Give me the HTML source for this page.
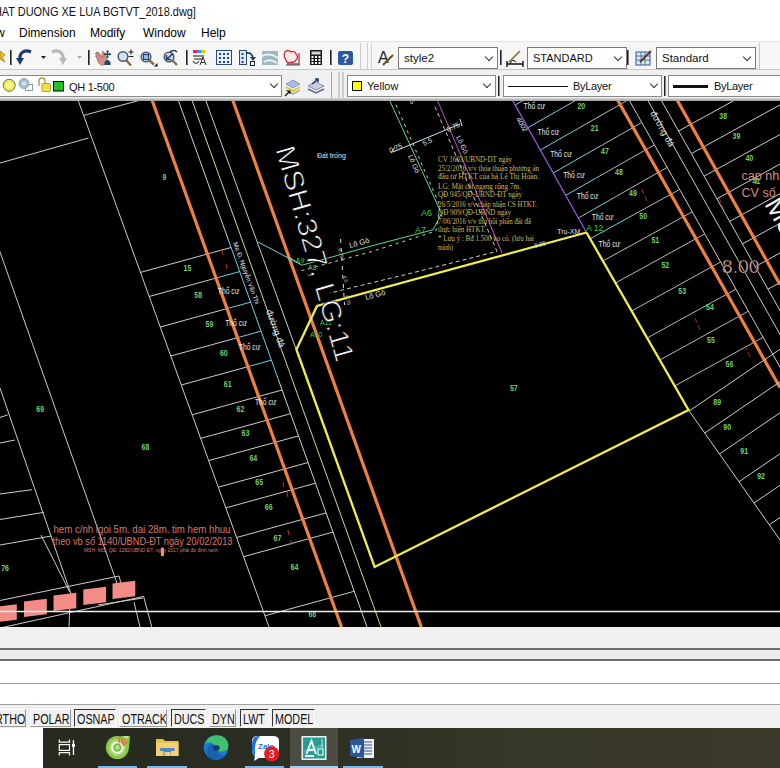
<!DOCTYPE html>
<html><head><meta charset="utf-8">
<style>
*{margin:0;padding:0;box-sizing:border-box}
html,body{width:780px;height:768px;overflow:hidden;background:#f0f0f0;font-family:"Liberation Sans",sans-serif;position:relative}
.a{position:absolute}
.t{position:absolute;white-space:nowrap;color:#000;font-size:12px;line-height:1}
#title{left:0;top:0;width:780px;height:22px;background:#fff}
#menu{left:0;top:22px;width:780px;height:20px;background:#fff}
#tb1{left:0;top:41px;width:780px;height:29px;background:#f6f6f6;border-top:1px solid #e4e4e4;border-bottom:1px solid #c8c8c8}
#tb2{left:0;top:70px;width:780px;height:31px;background:#f0f0f0;overflow:hidden}
.combo{position:absolute;background:#fff;border:1px solid #7a7a7a}
.chev{position:absolute;width:6px;height:6px;border-right:1.3px solid #333;border-bottom:1.3px solid #333;transform:rotate(45deg)}
.sep{position:absolute;width:2px;background:#222}
.grip{position:absolute;width:1px;background:#c0c0c0}
#draw{left:0;top:101px;width:780px;height:526px;background:#000;overflow:hidden}
#cmd{left:0;top:627px;width:780px;height:78px;background:#f0f0f0}
#status{left:0;top:705px;width:780px;height:23px;background:#f0f0f0}
.sb{position:absolute;top:4px;height:18px;font-size:14px;line-height:18px;color:#111;padding-left:2px;white-space:nowrap;overflow:hidden}
.sb span{display:inline-block;transform:scaleX(0.77);transform-origin:0 0}
.sunk{border-top:1px solid #333;border-left:1px solid #333;border-right:1px solid #fff;border-bottom:1px solid #fff}
.rais{border-top:1px solid #fff;border-left:1px solid #fff;border-right:1px solid #999;border-bottom:1px solid #999}
#task{left:0;top:728px;width:780px;height:40px;background:linear-gradient(90deg,#262a1e 0%,#2a2d21 30%,#303226 50%,#383828 70%,#3c3a2a 100%)}
</style></head><body>
<div id="title" class="a"><div class="t" style="left:-13.8px;top:6px;font-size:12.5px;transform:scaleX(0.875);transform-origin:0 0;color:#111">NHAT DUONG XE LUA BGTVT_2018.dwg]</div></div>
<div id="menu" class="a">
<div class="t" style="left:-4px;top:5px">w</div>
<div class="t" style="left:19px;top:5px">Dimension</div>
<div class="t" style="left:90px;top:5px">Modify</div>
<div class="t" style="left:143px;top:5px">Window</div>
<div class="t" style="left:201px;top:5px">Help</div>
</div>
<div id="tb1" class="a">
<svg class="a" style="left:0;top:0" width="780" height="28" viewBox="0 42 780 28">
<!-- lightning partial -->
<path d="M0 51 L5 55 L2 57 L5 62 L0 59 Z" fill="#f0c020" stroke="#806000" stroke-width="0.6"/>
<rect x="10" y="50" width="1.6" height="15" fill="#222"/>
<!-- undo -->
<path d="M31 52 C24 49 19 53 20 60" fill="none" stroke="#1c3c70" stroke-width="3.2"/>
<path d="M16 58 L24 58 L20 65 Z" fill="#1c3c70"/>
<path d="M41 56 L46 56 L43.5 59 Z" fill="#222"/>
<!-- redo gray -->
<path d="M52 52 C59 49 64 53 63 60" fill="none" stroke="#b8b8b8" stroke-width="3.2"/>
<path d="M67 58 L59 58 L63 65 Z" fill="#b8b8b8"/>
<path d="M77 56 L82 56 L79.5 59 Z" fill="#aaa"/>
<rect x="88" y="50" width="1.6" height="15" fill="#222"/>
<!-- pan hand -->
<path d="M95.5 53 Q97 51 99 53 L103 58 Q101 51 103.5 51.5 L106 57 Q107 60 107 63 L104 65 Q100 66 98 62 Z" fill="#d89088" stroke="#a06058" stroke-width="0.7"/>
<path d="M95 56 L100 61 M97.5 53.5 L102 59" stroke="#a06058" stroke-width="0.6"/>
<path d="M104.5 62 L107.5 59.5 L110.5 62 L110.5 65 L104.5 65 Z" fill="#1f4a6a"/>
<path d="M107.5 51 L107.5 57.5 M104.5 54.2 L110.5 54.2" stroke="#1f4a5a" stroke-width="1.4"/>
<path d="M106 52 L107.5 50 L109 52 Z M106 56.5 L107.5 58.5 L109 56.5 Z M105.5 52.7 L103.5 54.2 L105.5 55.7 Z M109.5 52.7 L111.5 54.2 L109.5 55.7 Z" fill="#1f4a5a"/>
<!-- zoom realtime -->
<path d="M126 60 L131 65.5" stroke="#8a7040" stroke-width="2.4"/>
<circle cx="123" cy="56.5" r="4.8" fill="#d0e2f2" stroke="#505a66" stroke-width="1.5"/>
<path d="M131 49.5 L131 54.5 M128.5 52 L133.5 52 M128.5 56.5 L133.5 56.5" stroke="#222" stroke-width="1.1"/>
<!-- zoom window -->
<path d="M149 60 L154 64.5" stroke="#8a7040" stroke-width="2.4"/>
<circle cx="146" cy="57" r="4.8" fill="#d0e2f2" stroke="#505a66" stroke-width="1.5"/>
<rect x="143.5" y="54.5" width="5" height="5" fill="#9ac0e8" stroke="#1c3c70" stroke-width="1.1"/>
<path d="M154 66.5 L157.5 66.5 L157.5 63 Z" fill="#111"/>
<!-- zoom previous -->
<path d="M172 60 L177 65" stroke="#8a7040" stroke-width="2.4"/>
<circle cx="169" cy="57" r="4.8" fill="#d0e2f2" stroke="#505a66" stroke-width="1.5"/>
<path d="M173 53.5 L167 59 M166.5 55 L166.5 59.5 L171 59.5" stroke="#1c3c70" stroke-width="1.6" fill="none"/>
<path d="M170 52 Q174 49 177 52" stroke="#1c3c70" stroke-width="1.6" fill="none"/>
<rect x="186" y="50" width="1.6" height="15" fill="#222"/>
<!-- properties -->
<rect x="193" y="50" width="4" height="3" fill="#e02080"/><rect x="197" y="50" width="4" height="3" fill="#20a0e0"/><rect x="201" y="50" width="4" height="3" fill="#f0c000"/>
<path d="M193 56 L204 56 M194 59 L203 59" stroke="#606060" stroke-width="1.3"/>
<path d="M200 65 L203 57 L206 65 M201 62.5 L205 62.5" stroke="#333" stroke-width="1" fill="none"/>
<path d="M193 61 Q196 66 199 61" stroke="#555" stroke-width="1.4" fill="none"/>
<!-- design center -->
<rect x="216.5" y="50.5" width="15" height="14" fill="#e6f0fa" stroke="#2a4a7a" stroke-width="1"/>
<g fill="#2a4a7a"><rect x="219" y="53" width="2" height="2"/><rect x="223" y="53" width="2" height="2"/><rect x="227" y="53" width="2" height="2"/><rect x="219" y="57" width="2" height="2"/><rect x="223" y="57" width="2" height="2"/><rect x="227" y="57" width="2" height="2"/><rect x="219" y="61" width="2" height="2"/><rect x="223" y="61" width="2" height="2"/><rect x="227" y="61" width="2" height="2"/></g>
<!-- tool palettes -->
<rect x="239.5" y="50.5" width="7" height="14" fill="#dce8f6" stroke="#2a4a7a" stroke-width="1"/>
<g fill="#2a4a7a"><rect x="241.5" y="53" width="2" height="2"/><rect x="241.5" y="57" width="2" height="2"/><rect x="241.5" y="61" width="2" height="2"/></g>
<path d="M246 53 Q252 52 253 58" stroke="#1c3c70" stroke-width="1.6" fill="none"/><path d="M250 57 L256 57 L253 61 Z" fill="#1c3c70"/>
<rect x="250.5" y="61.5" width="4" height="4" fill="#fff" stroke="#222" stroke-width="1"/>
<!-- sheet set (gray) -->
<rect x="262" y="51" width="16" height="14" fill="#9fb8bf"/>
<path d="M262 56 Q270 52 278 58 M264 62 Q270 58 277 63" stroke="#e8f0f0" stroke-width="2" fill="none"/>
<!-- markup red -->
<path d="M285 52 Q288 49 291 52 Q295 50 296 54 Q299 57 296 60 Q295 63 291 62 Q287 64 286 60 Q283 56 285 52 Z" fill="#fde8e8" stroke="#c83040" stroke-width="1.3"/>
<path d="M299 53 L299 64 L287 64" stroke="#c83040" stroke-width="1.3" fill="none"/>
<path d="M286 65 L300 65" stroke="#2a6a6a" stroke-width="1"/>
<!-- calculator -->
<rect x="310" y="50" width="12" height="15" fill="#1a1a1a"/>
<rect x="311.5" y="51.5" width="9" height="3" fill="#c8d8c8"/>
<g fill="#fff"><rect x="311.5" y="56" width="2" height="2"/><rect x="315" y="56" width="2" height="2"/><rect x="318.5" y="56" width="2" height="2"/><rect x="311.5" y="59" width="2" height="2"/><rect x="315" y="59" width="2" height="2"/><rect x="318.5" y="59" width="2" height="2"/><rect x="311.5" y="62" width="2" height="2"/><rect x="315" y="62" width="2" height="2"/><rect x="318.5" y="62" width="2" height="2"/></g>
<rect x="330" y="50" width="1.6" height="15" fill="#222"/>
<!-- help -->
<rect x="338" y="51" width="15" height="14" rx="2" fill="#2a5a9a"/>
<text x="345.5" y="63" font-family="Liberation Sans" font-weight="bold" font-size="12" fill="#fff" text-anchor="middle">?</text>
<rect x="360" y="43" width="1" height="26" fill="#c8c8c8"/>
<rect x="367" y="43" width="1" height="26" fill="#d0d0d0"/>
<rect x="371" y="43" width="1" height="26" fill="#d0d0d0"/>
<!-- text style A -->
<text x="378" y="63" font-family="Liberation Sans" font-size="16" fill="#222">A</text>
<path d="M383 65 L393 55" stroke="#6a4a20" stroke-width="2"/>
<rect x="500" y="50" width="1.6" height="15" fill="#222"/>
<!-- dim style icon -->
<path d="M507 64 L523 64 M507 61 L507 67 M523 61 L523 67" stroke="#111" stroke-width="1.4"/>
<path d="M509 62 L520 51" stroke="#8a6a30" stroke-width="1.6"/>
<path d="M510 64 Q512 58 516 62" stroke="#111" stroke-width="1" fill="none"/>
<rect x="627" y="50" width="1.6" height="15" fill="#222"/>
<!-- table style icon -->
<rect x="636" y="52" width="14" height="13" fill="#dce8f6" stroke="#2a5a9a" stroke-width="1"/>
<path d="M636 56 L650 56 M636 60 L650 60 M641 52 L641 65 M645 52 L645 65" stroke="#2a5a9a" stroke-width="0.8"/>
<path d="M640 62 L651 51" stroke="#5a3a20" stroke-width="1.8"/>
<rect x="759" y="43" width="1" height="26" fill="#c8c8c8"/>
</svg>
<div class="combo" style="left:398px;top:5px;width:100px;height:22px"><div class="t" style="left:5px;top:5px;font-size:11.5px;color:#111">style2</div><div class="chev" style="left:86.5px;top:6px"></div></div>
<div class="combo" style="left:527px;top:5px;width:100px;height:22px"><div class="t" style="left:5px;top:5px;font-size:11px;color:#111">STANDARD</div><div class="chev" style="left:86.5px;top:6px"></div></div>
<div class="combo" style="left:656px;top:5px;width:100px;height:22px"><div class="t" style="left:5px;top:5px;font-size:11.5px;color:#111">Standard</div><div class="chev" style="left:86.5px;top:6px"></div></div>
</div>
<div id="tb2" class="a">
<div class="a" style="left:0;top:27.7px;width:780px;height:3.3px;background:linear-gradient(#dcdcdc,#9a9a9a)"></div>
<div class="combo" style="left:-3px;top:5px;width:285px;height:22px;border-color:#888"><div class="t" style="left:71px;top:6px;font-size:11px;letter-spacing:-0.3px;color:#111">QH 1-500</div><div class="chev" style="left:273px;top:5px"></div></div>
<div class="combo" style="left:347px;top:5px;width:149px;height:22px;border-color:#888"><div style="position:absolute;left:4px;top:5px;width:10px;height:10px;background:#ffff00;border:1px solid #000"></div><div class="t" style="left:19px;top:5px;font-size:11px;color:#111">Yellow</div><div class="chev" style="left:135.5px;top:5px"></div></div>
<div class="combo" style="left:503px;top:5px;width:159px;height:22px;border-color:#888"><div style="position:absolute;left:4px;top:10px;width:60px;height:1px;background:#111"></div><div class="t" style="left:69px;top:5px;font-size:11px;letter-spacing:-0.3px;color:#111">ByLayer</div><div class="chev" style="left:146.5px;top:5px"></div></div>
<div class="combo" style="left:668px;top:5px;width:120px;height:22px;border-color:#888"><div style="position:absolute;left:4px;top:9px;width:35px;height:3px;background:#111"></div><div class="t" style="left:45px;top:5px;font-size:11px;letter-spacing:-0.3px;color:#111">ByLayer</div></div>
<svg class="a" style="left:0;top:0" width="780" height="30" viewBox="0 70 780 30">
<circle cx="9.2" cy="85.3" r="6" fill="#f0ec60" stroke="#707040" stroke-width="1"/>
<circle cx="9.2" cy="85.3" r="3" fill="#fafa90"/>
<rect x="25.5" y="84.5" width="7" height="6" fill="#fff" stroke="#8898a8" stroke-width="1"/>
<circle cx="24" cy="83.5" r="5" fill="#a8c0d0" stroke="#7890a0" stroke-width="0.8"/>
<circle cx="24" cy="83.5" r="2" fill="#d8e4ec"/>
<path d="M39 86 L39 81 Q39 78 42 78 Q45 78 45 81 L45 84" stroke="#b0a040" stroke-width="1.4" fill="none"/>
<rect x="42" y="83.5" width="8.5" height="8" rx="1" fill="#f0e040" stroke="#a09030" stroke-width="0.8"/>
<rect x="53.5" y="81.5" width="10" height="9.5" fill="#22c022" stroke="#000" stroke-width="1"/>
<rect x="331" y="72" width="1" height="26" fill="#a8a8a8"/>
<rect x="338.5" y="72" width="1" height="26" fill="#a8a8a8"/>
<rect x="342.5" y="72" width="1" height="26" fill="#a8a8a8"/>
<rect x="498" y="76" width="1.5" height="20" fill="#222"/>
<rect x="664" y="76" width="1.5" height="20" fill="#222"/>
<!-- layer icons -->
<path d="M286 84 L293 80 L300 84 L293 88 Z" fill="#a8b8e8" stroke="#6878a8" stroke-width="0.6"/>
<path d="M286 87 L293 91 L300 87" stroke="#d8c830" stroke-width="2" fill="none"/>
<path d="M286 90 L293 94 L300 90" stroke="#a0a060" stroke-width="1.2" fill="none"/>
<path d="M285 96 L290 91 M287 91 L290 91 L290 94" stroke="#111" stroke-width="1.2" fill="none"/>
<path d="M308 86 L316 82 L324 86 L316 90 Z" fill="#c8d0e0" stroke="#5a6a8a" stroke-width="0.7"/>
<path d="M308 89 L316 93 L324 89" stroke="#5a6a8a" stroke-width="1.4" fill="none"/>
<path d="M312 84 L318 79 M315 79 L318 79 L318 82" stroke="#1c3c70" stroke-width="1.6" fill="none"/>
</svg>
</div>
<div id="draw" class="a"><svg width="780" height="526" viewBox="0 101 780 526" style="position:absolute;left:0;top:0">
<line x1="78.0" y1="100.0" x2="269.0" y2="627.0" stroke="#cccccc" stroke-width="1" />
<line x1="83.3" y1="115.5" x2="138.5" y2="100.6" stroke="#cccccc" stroke-width="1" />
<line x1="0.0" y1="163.0" x2="88.5" y2="138.0" stroke="#cccccc" stroke-width="1" />
<line x1="-0.7" y1="250.0" x2="120.0" y2="591.8" stroke="#cccccc" stroke-width="1" />
<line x1="0.0" y1="388.0" x2="72.0" y2="597.0" stroke="#cccccc" stroke-width="1" />
<line x1="0.0" y1="417.4" x2="7.7" y2="415.0" stroke="#cccccc" stroke-width="1" />
<line x1="0.0" y1="443.0" x2="15.0" y2="440.0" stroke="#cccccc" stroke-width="1" />
<line x1="0.0" y1="519.5" x2="44.0" y2="512.3" stroke="#cccccc" stroke-width="1" />
<line x1="0.0" y1="494.0" x2="32.0" y2="489.7" stroke="#cccccc" stroke-width="1" />
<line x1="0.0" y1="545.0" x2="51.3" y2="536.0" stroke="#cccccc" stroke-width="1" />
<line x1="41.0" y1="535.0" x2="69.7" y2="592.0" stroke="#cccccc" stroke-width="1" />
<line x1="0.0" y1="600.5" x2="119.0" y2="576.0" stroke="#cccccc" stroke-width="1" />
<line x1="0.0" y1="628.0" x2="143.6" y2="596.4" stroke="#cccccc" stroke-width="1" />
<line x1="143.6" y1="596.4" x2="151.8" y2="627.0" stroke="#cccccc" stroke-width="1" />
<line x1="119.0" y1="576.0" x2="125.0" y2="597.0" stroke="#cccccc" stroke-width="1" />
<line x1="134.0" y1="602.0" x2="140.0" y2="627.0" stroke="#cccccc" stroke-width="1" />
<line x1="98.0" y1="605.0" x2="143.0" y2="598.0" stroke="#cccccc" stroke-width="1" />
<line x1="69.0" y1="627.0" x2="70.0" y2="600.0" stroke="#cccccc" stroke-width="1" />
<polygon points="-6.0,622.5 16.8,619.8 16.8,604.3 -6.0,607.0" fill="#f38b86"/>
<polygon points="24.0,617.0 46.8,614.3 46.8,598.8 24.0,601.5" fill="#f38b86"/>
<polygon points="53.5,611.0 76.3,608.3 76.3,592.8 53.5,595.5" fill="#f38b86"/>
<polygon points="83.3,605.0 106.1,602.3 106.1,586.8 83.3,589.5" fill="#f38b86"/>
<polygon points="112.5,599.0 135.3,596.3 135.3,580.8 112.5,583.5" fill="#f38b86"/>
<text x="53.5" y="532.5" fill="#d8786e" font-size="10.5" font-family="Liberation Sans" textLength="177" lengthAdjust="spacingAndGlyphs">hem c/nh lgoi 5m. dai 28m. tim hem hhuu</text>
<text x="52.5" y="544.5" fill="#d8786e" font-size="10.5" font-family="Liberation Sans" textLength="180" lengthAdjust="spacingAndGlyphs">theo vb số 1140/UBND-ĐT ngày 20/02/2013</text>
<text x="84.0" y="552.3" fill="#d8786e" font-size="4.6" font-family="Liberation Sans" textLength="134" lengthAdjust="spacingAndGlyphs">MSH: 665, QĐ: 1282/UBND-ĐT, ngày 2017 phải đo định ranh</text>
<rect x="161" y="547.6" width="3" height="8.5" fill="#f38b86"/>
<line x1="178.2" y1="100.0" x2="228.4" y2="240.0" stroke="#b0dcd8" stroke-width="1" />
<line x1="228.4" y1="240.0" x2="278.5" y2="380.0" stroke="#70d0e0" stroke-width="1" />
<line x1="278.5" y1="380.0" x2="367.0" y2="627.0" stroke="#c8d8d8" stroke-width="1" />
<line x1="191.9" y1="100.0" x2="381.0" y2="627.0" stroke="#c0e090" stroke-width="1" />
<line x1="205.6" y1="100.0" x2="296.0" y2="349.0" stroke="#cccccc" stroke-width="1" />
<line x1="140.5" y1="272.4" x2="231.0" y2="247.5" stroke="#cccccc" stroke-width="1" />
<line x1="149.2" y1="296.5" x2="216.0" y2="278.1" stroke="#cccccc" stroke-width="1" />
<line x1="216.0" y1="278.1" x2="239.7" y2="271.6" stroke="#70d0e0" stroke-width="1" />
<line x1="160.3" y1="327.0" x2="227.0" y2="308.6" stroke="#cccccc" stroke-width="1" />
<line x1="227.0" y1="308.6" x2="250.6" y2="302.2" stroke="#70d0e0" stroke-width="1" />
<line x1="170.8" y1="356.0" x2="237.5" y2="337.7" stroke="#cccccc" stroke-width="1" />
<line x1="237.5" y1="337.7" x2="261.0" y2="331.2" stroke="#70d0e0" stroke-width="1" />
<line x1="181.3" y1="385.0" x2="247.9" y2="366.7" stroke="#cccccc" stroke-width="1" />
<line x1="247.9" y1="366.7" x2="271.4" y2="360.2" stroke="#70d0e0" stroke-width="1" />
<line x1="192.1" y1="414.8" x2="282.1" y2="390.0" stroke="#cccccc" stroke-width="1" />
<line x1="200.6" y1="438.4" x2="290.6" y2="413.7" stroke="#cccccc" stroke-width="1" />
<line x1="208.7" y1="460.6" x2="298.5" y2="435.9" stroke="#cccccc" stroke-width="1" />
<line x1="218.3" y1="487.2" x2="308.1" y2="462.5" stroke="#cccccc" stroke-width="1" />
<line x1="225.8" y1="507.9" x2="315.5" y2="483.2" stroke="#cccccc" stroke-width="1" />
<line x1="236.6" y1="537.5" x2="326.1" y2="512.9" stroke="#cccccc" stroke-width="1" />
<line x1="243.5" y1="556.7" x2="333.0" y2="532.1" stroke="#cccccc" stroke-width="1" />
<line x1="264.9" y1="615.8" x2="354.2" y2="591.3" stroke="#cccccc" stroke-width="1" />
<line x1="152.0" y1="100.0" x2="341.5" y2="627.0" stroke="#ee8040" stroke-width="3.2" />
<line x1="232.7" y1="100.0" x2="421.3" y2="627.0" stroke="#ee8040" stroke-width="3.2" />
<line x1="222.0" y1="250.0" x2="222.8" y2="255.0" stroke="#c03020" stroke-width="1" />
<line x1="226.0" y1="264.0" x2="226.8" y2="269.0" stroke="#c03020" stroke-width="1" />
<line x1="283.0" y1="482.0" x2="283.8" y2="487.0" stroke="#c03020" stroke-width="1" />
<line x1="287.0" y1="492.0" x2="287.8" y2="497.0" stroke="#c03020" stroke-width="1" />
<line x1="288.0" y1="530.0" x2="288.8" y2="535.0" stroke="#c03020" stroke-width="1" />
<line x1="291.0" y1="540.0" x2="291.8" y2="545.0" stroke="#c03020" stroke-width="1" />
<line x1="629.2" y1="100.2" x2="791.5" y2="387.5" stroke="#cccccc" stroke-width="1" />
<line x1="647.7" y1="100.2" x2="810.0" y2="387.5" stroke="#c8d8a8" stroke-width="1" />
<line x1="661.2" y1="100.2" x2="823.5" y2="387.5" stroke="#cccccc" stroke-width="1" />
<line x1="515.2" y1="105.0" x2="553.2" y2="83.3" stroke="#70d0e0" stroke-width="1" />
<line x1="553.2" y1="83.3" x2="603.5" y2="54.7" stroke="#b8b8b8" stroke-width="1" />
<line x1="527.9" y1="127.7" x2="565.9" y2="106.0" stroke="#70d0e0" stroke-width="1" />
<line x1="565.9" y1="106.0" x2="616.3" y2="77.3" stroke="#b8b8b8" stroke-width="1" />
<line x1="540.4" y1="150.0" x2="578.4" y2="128.3" stroke="#70d0e0" stroke-width="1" />
<line x1="578.4" y1="128.3" x2="628.8" y2="99.6" stroke="#b8b8b8" stroke-width="1" />
<line x1="553.2" y1="173.0" x2="591.2" y2="151.3" stroke="#70d0e0" stroke-width="1" />
<line x1="591.2" y1="151.3" x2="641.8" y2="122.5" stroke="#b8b8b8" stroke-width="1" />
<line x1="565.7" y1="195.4" x2="603.7" y2="173.7" stroke="#70d0e0" stroke-width="1" />
<line x1="603.7" y1="173.7" x2="654.4" y2="144.9" stroke="#b8b8b8" stroke-width="1" />
<line x1="578.4" y1="218.0" x2="616.4" y2="196.3" stroke="#70d0e0" stroke-width="1" />
<line x1="616.4" y1="196.3" x2="667.2" y2="167.4" stroke="#b8b8b8" stroke-width="1" />
<line x1="590.1" y1="238.8" x2="628.1" y2="217.8" stroke="#70d0e0" stroke-width="1" />
<line x1="628.1" y1="217.8" x2="679.6" y2="189.5" stroke="#b8b8b8" stroke-width="1" />
<line x1="602.9" y1="261.0" x2="692.3" y2="211.8" stroke="#b8b8b8" stroke-width="1" />
<line x1="615.5" y1="283.0" x2="704.7" y2="233.9" stroke="#b8b8b8" stroke-width="1" />
<line x1="631.6" y1="311.0" x2="720.6" y2="262.0" stroke="#b8b8b8" stroke-width="1" />
<line x1="647.1" y1="338.0" x2="735.9" y2="289.2" stroke="#b8b8b8" stroke-width="1" />
<line x1="659.8" y1="360.0" x2="748.4" y2="311.2" stroke="#b8b8b8" stroke-width="1" />
<line x1="674.7" y1="386.0" x2="763.2" y2="337.3" stroke="#b8b8b8" stroke-width="1" />
<line x1="678.6" y1="131.0" x2="780.0" y2="75.2" stroke="#cccccc" stroke-width="1" />
<line x1="691.4" y1="153.6" x2="780.0" y2="104.9" stroke="#cccccc" stroke-width="1" />
<line x1="704.1" y1="176.2" x2="780.0" y2="134.5" stroke="#cccccc" stroke-width="1" />
<line x1="716.9" y1="198.8" x2="780.0" y2="164.1" stroke="#cccccc" stroke-width="1" />
<line x1="729.7" y1="221.4" x2="780.0" y2="193.7" stroke="#cccccc" stroke-width="1" />
<line x1="742.4" y1="244.0" x2="780.0" y2="223.3" stroke="#cccccc" stroke-width="1" />
<line x1="755.2" y1="266.6" x2="780.0" y2="253.0" stroke="#cccccc" stroke-width="1" />
<line x1="768.0" y1="289.2" x2="780.0" y2="282.6" stroke="#cccccc" stroke-width="1" />
<line x1="780.7" y1="311.8" x2="780.0" y2="312.2" stroke="#cccccc" stroke-width="1" />
<line x1="793.5" y1="334.4" x2="780.0" y2="341.8" stroke="#cccccc" stroke-width="1" />
<line x1="806.3" y1="357.0" x2="780.0" y2="371.4" stroke="#cccccc" stroke-width="1" />
<line x1="819.0" y1="379.6" x2="780.0" y2="401.1" stroke="#cccccc" stroke-width="1" />
<line x1="831.8" y1="402.2" x2="780.0" y2="430.7" stroke="#cccccc" stroke-width="1" />
<line x1="844.6" y1="424.8" x2="780.0" y2="460.3" stroke="#cccccc" stroke-width="1" />
<line x1="512.5" y1="100.2" x2="586.5" y2="232.5" stroke="#9a5ae0" stroke-width="1.25" />
<line x1="617.7" y1="100.2" x2="780.0" y2="387.5" stroke="#ee8040" stroke-width="3.2" />
<line x1="677.1" y1="100.0" x2="780.0" y2="284.6" stroke="#ee8040" stroke-width="3.2" />
<line x1="642.0" y1="189.0" x2="644.0" y2="194.0" stroke="#a03020" stroke-width="1" />
<line x1="645.0" y1="196.0" x2="647.0" y2="201.0" stroke="#a03020" stroke-width="1" />
<line x1="719.0" y1="198.0" x2="721.0" y2="203.0" stroke="#a03020" stroke-width="1" />
<line x1="722.0" y1="205.0" x2="724.0" y2="210.0" stroke="#a03020" stroke-width="1" />
<line x1="695.0" y1="318.0" x2="697.0" y2="323.0" stroke="#a03020" stroke-width="1" />
<line x1="698.0" y1="325.0" x2="700.0" y2="330.0" stroke="#a03020" stroke-width="1" />
<line x1="745.0" y1="345.0" x2="747.0" y2="350.0" stroke="#a03020" stroke-width="1" />
<line x1="748.0" y1="352.0" x2="750.0" y2="357.0" stroke="#a03020" stroke-width="1" />
<line x1="688.5" y1="410.0" x2="780.0" y2="540.0" stroke="#cccccc" stroke-width="1" />
<line x1="689.2" y1="411.0" x2="780.0" y2="349.3" stroke="#cccccc" stroke-width="1" />
<line x1="704.7" y1="433.0" x2="780.0" y2="381.8" stroke="#cccccc" stroke-width="1" />
<line x1="719.5" y1="454.0" x2="780.0" y2="412.8" stroke="#cccccc" stroke-width="1" />
<line x1="739.0" y1="481.7" x2="780.0" y2="453.8" stroke="#cccccc" stroke-width="1" />
<line x1="754.0" y1="503.0" x2="780.0" y2="485.3" stroke="#cccccc" stroke-width="1" />
<line x1="769.3" y1="524.8" x2="780.0" y2="517.5" stroke="#cccccc" stroke-width="1" />
<polyline points="389.5,100.2 441.5,213.6 433.0,229.8 370.0,246.3 330.0,257.5 301.8,265.2 290.0,257.8" fill="none" stroke="#60d888" stroke-width="1" />
<polyline points="396.0,104.8 440.0,206.0 436.0,231.0 372.0,251.5 300.0,271.0" fill="none" stroke="#cccccc" stroke-width="1" stroke-dasharray="3 4"/>
<polyline points="435.0,106.7 497.0,251.4 420.0,271.0 330.0,293.0" fill="none" stroke="#cccccc" stroke-width="1" stroke-dasharray="4 3"/>
<line x1="437.7" y1="100.9" x2="502.0" y2="252.7" stroke="#b048b0" stroke-width="1.1" />
<polyline points="258.0,242.0 301.0,264.6" fill="none" stroke="#70d0e0" stroke-width="1" />
<text x="438.0" y="162.0" fill="#cbbb62" font-size="7.6" font-family="Liberation Serif" textLength="74" lengthAdjust="spacingAndGlyphs">CV 1603/UBND-DT ngày</text>
<text x="438.0" y="170.5" fill="#cbbb62" font-size="7.6" font-family="Liberation Serif" textLength="101" lengthAdjust="spacingAndGlyphs">25/2/2016 v/v thỏa thuận phương án</text>
<text x="438.0" y="179.0" fill="#cbbb62" font-size="7.6" font-family="Liberation Serif" textLength="101" lengthAdjust="spacingAndGlyphs">đầu tư HTKT của bà Lê Thị Hoàn.</text>
<text x="438.0" y="188.5" fill="#cbbb62" font-size="7.6" font-family="Liberation Serif" textLength="83" lengthAdjust="spacingAndGlyphs">LG: Mặt cắt ngang rộng 7m.</text>
<text x="438.0" y="197.0" fill="#cbbb62" font-size="7.6" font-family="Liberation Serif" textLength="84" lengthAdjust="spacingAndGlyphs">QĐ 945/QĐ-UBND-ĐT ngày</text>
<text x="438.0" y="206.5" fill="#cbbb62" font-size="7.6" font-family="Liberation Serif" textLength="99" lengthAdjust="spacingAndGlyphs">26/5/2016 v/v chấp nhận CS HTKT.</text>
<text x="438.0" y="215.0" fill="#cbbb62" font-size="7.6" font-family="Liberation Serif" textLength="73" lengthAdjust="spacingAndGlyphs">QĐ 909/QĐ-UBND ngày</text>
<text x="438.0" y="224.0" fill="#cbbb62" font-size="7.6" font-family="Liberation Serif" textLength="93" lengthAdjust="spacingAndGlyphs">7/06/2016 v/v thu hồi phần đất đã</text>
<text x="438.0" y="232.0" fill="#cbbb62" font-size="7.6" font-family="Liberation Serif" textLength="48" lengthAdjust="spacingAndGlyphs">thực hiện HTKT.</text>
<text x="438.0" y="241.0" fill="#cbbb62" font-size="7.6" font-family="Liberation Serif" textLength="96" lengthAdjust="spacingAndGlyphs">* Lưu ý : Bđ 1.500 ko có. (lưu hai</text>
<text x="438.0" y="249.5" fill="#cbbb62" font-size="7.6" font-family="Liberation Serif" textLength="15" lengthAdjust="spacingAndGlyphs">mảnh)</text>
<polyline points="586.5,232.5 688.5,410.0 374.6,567.0 296.4,349.5 317.0,306.0 586.5,232.5" fill="none" stroke="#f2ee48" stroke-width="2.3" stroke-linejoin="miter"/>
<text x="162.6" y="179.7" fill="#6ad26a" font-size="9.2" font-family="Liberation Sans" textLength="3.9" lengthAdjust="spacingAndGlyphs" font-weight="bold">9</text>
<text x="183.6" y="270.7" fill="#6ad26a" font-size="9.2" font-family="Liberation Sans" textLength="7.8" lengthAdjust="spacingAndGlyphs" font-weight="bold">15</text>
<text x="36.3" y="412.4" fill="#6ad26a" font-size="9.2" font-family="Liberation Sans" textLength="7.8" lengthAdjust="spacingAndGlyphs" font-weight="bold">69</text>
<text x="141.6" y="449.7" fill="#6ad26a" font-size="9.2" font-family="Liberation Sans" textLength="7.8" lengthAdjust="spacingAndGlyphs" font-weight="bold">68</text>
<text x="194.3" y="297.7" fill="#6ad26a" font-size="9.2" font-family="Liberation Sans" textLength="7.8" lengthAdjust="spacingAndGlyphs" font-weight="bold">58</text>
<text x="205.6" y="327.3" fill="#6ad26a" font-size="9.2" font-family="Liberation Sans" textLength="7.8" lengthAdjust="spacingAndGlyphs" font-weight="bold">59</text>
<text x="219.9" y="355.5" fill="#6ad26a" font-size="9.2" font-family="Liberation Sans" textLength="7.8" lengthAdjust="spacingAndGlyphs" font-weight="bold">60</text>
<text x="223.8" y="386.7" fill="#6ad26a" font-size="9.2" font-family="Liberation Sans" textLength="7.8" lengthAdjust="spacingAndGlyphs" font-weight="bold">61</text>
<text x="236.6" y="412.4" fill="#6ad26a" font-size="9.2" font-family="Liberation Sans" textLength="7.8" lengthAdjust="spacingAndGlyphs" font-weight="bold">62</text>
<text x="241.6" y="435.5" fill="#6ad26a" font-size="9.2" font-family="Liberation Sans" textLength="7.8" lengthAdjust="spacingAndGlyphs" font-weight="bold">63</text>
<text x="249.4" y="460.7" fill="#6ad26a" font-size="9.2" font-family="Liberation Sans" textLength="7.8" lengthAdjust="spacingAndGlyphs" font-weight="bold">64</text>
<text x="255.3" y="485.0" fill="#6ad26a" font-size="9.2" font-family="Liberation Sans" textLength="7.8" lengthAdjust="spacingAndGlyphs" font-weight="bold">65</text>
<text x="264.8" y="509.7" fill="#6ad26a" font-size="9.2" font-family="Liberation Sans" textLength="7.8" lengthAdjust="spacingAndGlyphs" font-weight="bold">66</text>
<text x="273.6" y="540.7" fill="#6ad26a" font-size="9.2" font-family="Liberation Sans" textLength="7.8" lengthAdjust="spacingAndGlyphs" font-weight="bold">67</text>
<text x="290.6" y="570.4" fill="#6ad26a" font-size="9.2" font-family="Liberation Sans" textLength="7.8" lengthAdjust="spacingAndGlyphs" font-weight="bold">64</text>
<text x="308.4" y="617.1" fill="#6ad26a" font-size="9.2" font-family="Liberation Sans" textLength="7.8" lengthAdjust="spacingAndGlyphs" font-weight="bold">68</text>
<text x="509.9" y="390.7" fill="#6ad26a" font-size="9.2" font-family="Liberation Sans" textLength="7.8" lengthAdjust="spacingAndGlyphs" font-weight="bold">57</text>
<text x="577.4" y="108.5" fill="#6ad26a" font-size="9.2" font-family="Liberation Sans" textLength="7.8" lengthAdjust="spacingAndGlyphs" font-weight="bold">20</text>
<text x="590.8" y="131.4" fill="#6ad26a" font-size="9.2" font-family="Liberation Sans" textLength="7.8" lengthAdjust="spacingAndGlyphs" font-weight="bold">21</text>
<text x="601.1" y="153.7" fill="#6ad26a" font-size="9.2" font-family="Liberation Sans" textLength="7.8" lengthAdjust="spacingAndGlyphs" font-weight="bold">47</text>
<text x="615.1" y="175.2" fill="#6ad26a" font-size="9.2" font-family="Liberation Sans" textLength="7.8" lengthAdjust="spacingAndGlyphs" font-weight="bold">48</text>
<text x="629.1" y="196.0" fill="#6ad26a" font-size="9.2" font-family="Liberation Sans" textLength="7.8" lengthAdjust="spacingAndGlyphs" font-weight="bold">49</text>
<text x="639.3" y="218.9" fill="#6ad26a" font-size="9.2" font-family="Liberation Sans" textLength="7.8" lengthAdjust="spacingAndGlyphs" font-weight="bold">50</text>
<text x="651.4" y="243.1" fill="#6ad26a" font-size="9.2" font-family="Liberation Sans" textLength="7.8" lengthAdjust="spacingAndGlyphs" font-weight="bold">51</text>
<text x="661.4" y="268.0" fill="#6ad26a" font-size="9.2" font-family="Liberation Sans" textLength="7.8" lengthAdjust="spacingAndGlyphs" font-weight="bold">52</text>
<text x="719.3" y="118.7" fill="#6ad26a" font-size="9.2" font-family="Liberation Sans" textLength="7.8" lengthAdjust="spacingAndGlyphs" font-weight="bold">38</text>
<text x="732.6" y="138.7" fill="#6ad26a" font-size="9.2" font-family="Liberation Sans" textLength="7.8" lengthAdjust="spacingAndGlyphs" font-weight="bold">39</text>
<text x="745.4" y="161.0" fill="#6ad26a" font-size="9.2" font-family="Liberation Sans" textLength="7.8" lengthAdjust="spacingAndGlyphs" font-weight="bold">40</text>
<text x="752.4" y="183.9" fill="#6ad26a" font-size="9.2" font-family="Liberation Sans" textLength="7.8" lengthAdjust="spacingAndGlyphs" font-weight="bold">41</text>
<text x="678.3" y="294.2" fill="#6ad26a" font-size="9.2" font-family="Liberation Sans" textLength="7.8" lengthAdjust="spacingAndGlyphs" font-weight="bold">53</text>
<text x="706.1" y="310.4" fill="#6ad26a" font-size="9.2" font-family="Liberation Sans" textLength="7.8" lengthAdjust="spacingAndGlyphs" font-weight="bold">54</text>
<text x="707.1" y="342.7" fill="#6ad26a" font-size="9.2" font-family="Liberation Sans" textLength="7.8" lengthAdjust="spacingAndGlyphs" font-weight="bold">55</text>
<text x="725.5" y="366.9" fill="#6ad26a" font-size="9.2" font-family="Liberation Sans" textLength="7.8" lengthAdjust="spacingAndGlyphs" font-weight="bold">56</text>
<text x="713.3" y="404.7" fill="#6ad26a" font-size="9.2" font-family="Liberation Sans" textLength="7.8" lengthAdjust="spacingAndGlyphs" font-weight="bold">89</text>
<text x="723.3" y="430.2" fill="#6ad26a" font-size="9.2" font-family="Liberation Sans" textLength="7.8" lengthAdjust="spacingAndGlyphs" font-weight="bold">90</text>
<text x="740.3" y="454.0" fill="#6ad26a" font-size="9.2" font-family="Liberation Sans" textLength="7.8" lengthAdjust="spacingAndGlyphs" font-weight="bold">91</text>
<text x="757.2" y="479.0" fill="#6ad26a" font-size="9.2" font-family="Liberation Sans" textLength="7.8" lengthAdjust="spacingAndGlyphs" font-weight="bold">92</text>
<text x="1.2" y="570.7" fill="#6ad26a" font-size="9.2" font-family="Liberation Sans" textLength="7.8" lengthAdjust="spacingAndGlyphs" font-weight="bold">76</text>
<text x="217.8" y="293.5" fill="#e8e8e8" font-size="8.5" font-family="Liberation Sans" textLength="21.5" lengthAdjust="spacingAndGlyphs">Thổ cư</text>
<text x="225.2" y="326.0" fill="#e8e8e8" font-size="8.5" font-family="Liberation Sans" textLength="21.5" lengthAdjust="spacingAndGlyphs">Thổ cư</text>
<text x="238.8" y="350.0" fill="#e8e8e8" font-size="8.5" font-family="Liberation Sans" textLength="21.5" lengthAdjust="spacingAndGlyphs">Thổ cư</text>
<text x="254.9" y="405.0" fill="#e8e8e8" font-size="8.5" font-family="Liberation Sans" textLength="21.5" lengthAdjust="spacingAndGlyphs">Thổ cư</text>
<text x="523.6" y="108.8" fill="#e8e8e8" font-size="8.5" font-family="Liberation Sans" textLength="21.5" lengthAdjust="spacingAndGlyphs">Thổ cư</text>
<text x="537.5" y="135.0" fill="#e8e8e8" font-size="8.5" font-family="Liberation Sans" textLength="21.5" lengthAdjust="spacingAndGlyphs">Thổ cư</text>
<text x="550.2" y="157.0" fill="#e8e8e8" font-size="8.5" font-family="Liberation Sans" textLength="21.5" lengthAdjust="spacingAndGlyphs">Thổ cư</text>
<text x="563.2" y="177.8" fill="#e8e8e8" font-size="8.5" font-family="Liberation Sans" textLength="21.5" lengthAdjust="spacingAndGlyphs">Thổ cư</text>
<text x="576.8" y="199.0" fill="#e8e8e8" font-size="8.5" font-family="Liberation Sans" textLength="21.5" lengthAdjust="spacingAndGlyphs">Thổ cư</text>
<text x="591.8" y="219.9" fill="#e8e8e8" font-size="8.5" font-family="Liberation Sans" textLength="21.5" lengthAdjust="spacingAndGlyphs">Thổ cư</text>
<text x="598.6" y="247.0" fill="#e8e8e8" font-size="8.5" font-family="Liberation Sans" textLength="21.5" lengthAdjust="spacingAndGlyphs">Thổ cư</text>
<text x="594.8" y="231.0" fill="#44c844" font-size="8.5" font-family="Liberation Sans" text-anchor="middle">A 12</text>
<text x="568.8" y="234.0" fill="#e0e0e0" font-size="7" font-family="Liberation Sans" text-anchor="middle">Trụ-XM</text>
<text x="317.0" y="157.5" fill="#e8e8e8" font-size="7" font-family="Liberation Sans" >Đất trống</text>
<text x="432.0" y="216.0" fill="#44c844" font-size="9" font-family="Liberation Sans" text-anchor="end">A6</text>
<text x="426.0" y="233.0" fill="#44c844" font-size="9" font-family="Liberation Sans" text-anchor="end">A7</text>
<text x="300.0" y="263.0" fill="#44c844" font-size="7" font-family="Liberation Sans" text-anchor="middle">A9</text>
<text x="308.0" y="270.0" fill="#44c844" font-size="7" font-family="Liberation Sans" >A8</text>
<text x="320.0" y="325.0" fill="#44c844" font-size="7" font-family="Liberation Sans" >A11</text>
<text x="310.0" y="337.0" fill="#44c844" font-size="7" font-family="Liberation Sans" >A10</text>
<text x="650.0" y="113.0" fill="#e8e8e8" font-size="9" font-family="Liberation Sans" transform="rotate(60.5 650.0 113.0)" >đường đá</text>
<text x="266.0" y="311.0" fill="#e8e8e8" font-size="9" font-family="Liberation Sans" transform="rotate(70 266.0 311.0)" >đường đá</text>
<text x="233.0" y="243.0" fill="#e8e8e8" font-size="6.5" font-family="Liberation Sans" transform="rotate(70 233.0 243.0)" >Ma Đ. Nguyễn Văn Thi</text>
<text x="516.0" y="119.0" fill="#e8e8e8" font-size="7" font-family="Liberation Sans" transform="rotate(60 516.0 119.0)" >4002</text>
<text x="741.6" y="179.6" fill="#d88a7e" font-size="12.5" font-family="Liberation Sans" >cap nhat</text>
<text x="741.6" y="196.5" fill="#d88a7e" font-size="12.5" font-family="Liberation Sans" >CV số</text>
<text x="722.0" y="272.7" fill="#f8c0b4" font-size="18.5" font-family="Liberation Sans" textLength="37.4" lengthAdjust="spacingAndGlyphs" stroke="#000" stroke-width="0.45">8.00</text>
<text x="275.2" y="149.0" fill="#f8f8f8" font-size="27.5" font-family="Liberation Sans" transform="rotate(74 275.2 149.0)" textLength="223" lengthAdjust="spacingAndGlyphs" stroke="#000" stroke-width="0.7">MSH:327, LG:11</text>
<text x="764.0" y="204.0" fill="#f4f4f4" font-size="27" font-family="Liberation Sans" transform="rotate(60 764.0 204.0)" >MSH</text>
<text x="350.0" y="248.0" fill="#e0e0e0" font-size="7.5" font-family="Liberation Sans" transform="rotate(-15 350.0 248.0)" >Lô Gò</text>
<text x="366.0" y="300.0" fill="#e0e0e0" font-size="7.5" font-family="Liberation Sans" transform="rotate(-15 366.0 300.0)" >Lô Gò</text>
<line x1="340.6" y1="239.0" x2="344.5" y2="305.0" stroke="#e0e0e0" stroke-width="1" stroke-dasharray="4 5"/>
<text x="338.0" y="249.0" fill="#d0d0d0" font-size="5" font-family="Liberation Sans" transform="rotate(75 338.0 249.0)" >0.75</text>
<text x="343.0" y="276.0" fill="#d0d0d0" font-size="5" font-family="Liberation Sans" transform="rotate(75 343.0 276.0)" >4.5</text>
<text x="345.0" y="296.0" fill="#d0d0d0" font-size="5" font-family="Liberation Sans" transform="rotate(75 345.0 296.0)" >0.75</text>
<line x1="393.0" y1="152.0" x2="460.0" y2="124.0" stroke="#e0e0e0" stroke-width="1" />
<line x1="395.0" y1="147.0" x2="391.0" y2="153.0" stroke="#e0e0e0" stroke-width="1" />
<line x1="460.0" y1="119.0" x2="462.0" y2="126.0" stroke="#e0e0e0" stroke-width="1" />
<text x="390.5" y="153.0" fill="#e8e8e8" font-size="7" font-family="Liberation Sans" transform="rotate(-25 390.5 153.0)" >0.75</text>
<text x="424.0" y="146.0" fill="#e8e8e8" font-size="7" font-family="Liberation Sans" transform="rotate(-25 424.0 146.0)" >5.5</text>
<text x="448.0" y="132.0" fill="#e8e8e8" font-size="7" font-family="Liberation Sans" transform="rotate(-25 448.0 132.0)" >0.75</text>
<text x="408.0" y="156.0" fill="#e0e0e0" font-size="7" font-family="Liberation Sans" transform="rotate(67 408.0 156.0)" >Lô Gò</text>
<text x="456.0" y="137.0" fill="#e0e0e0" font-size="7" font-family="Liberation Sans" transform="rotate(65 456.0 137.0)" >Lô Gò</text>
<text x="410.0" y="104.0" fill="#e0e0e0" font-size="6" font-family="Liberation Sans" >0</text>
<text x="535.0" y="248.0" fill="#e0e0e0" font-size="6" font-family="Liberation Sans" transform="rotate(-15 535.0 248.0)" >8.85</text>
<line x1="0.0" y1="611.5" x2="780.0" y2="611.5" stroke="#f0f0f0" stroke-width="1.3" />
</svg></div>
<div id="cmd" class="a">
<div class="a" style="left:0;top:21px;width:780px;height:2px;background:#6e6e6e"></div>
<div class="a" style="left:0;top:23px;width:780px;height:10px;background:#ececec"></div>
<div class="a" style="left:0;top:32px;width:780px;height:2px;background:#6e6e6e"></div>
<div class="a" style="left:0;top:34px;width:780px;height:22px;background:#fff"></div>
<div class="a" style="left:0;top:56px;width:780px;height:1px;background:#a0a0a0"></div>
<div class="a" style="left:0;top:57px;width:780px;height:20px;background:#fff"></div>
<div class="a" style="left:0;top:77px;width:780px;height:1px;background:#a0a0a0"></div>
</div>
<div id="status" class="a">
<div class="sb rais" style="left:-8px;width:34px"><span>RTHO</span></div>
<div class="sb rais" style="left:30px;width:41px"><span>POLAR</span></div>
<div class="sb sunk" style="left:74px;width:42px"><span>OSNAP</span></div>
<div class="sb rais" style="left:119px;width:48px"><span>OTRACK</span></div>
<div class="sb sunk" style="left:171px;width:35px"><span>DUCS</span></div>
<div class="sb rais" style="left:209px;width:27px"><span>DYN</span></div>
<div class="sb sunk" style="left:240px;width:29px"><span>LWT</span></div>
<div class="sb sunk" style="left:272px;width:43px"><span>MODEL</span></div>
</div>
<div id="task" class="a">
<div class="a" style="left:0;top:0;width:43px;height:40px;background:#fff"></div>
<div class="a" style="left:290px;top:0;width:48px;height:40px;background:#4c4c42"></div>
<svg class="a" style="left:0;top:0" width="780" height="40" viewBox="0 728 780 40">
<!-- task view -->
<path d="M59.3 739.5 L59.3 742.2 L69.5 742.2 L69.5 739.5 M59.3 755.5 L59.3 752.6 L69.5 752.6 L69.5 755.5" stroke="#fff" stroke-width="1.2" fill="none"/>
<rect x="59.3" y="744.6" width="10.2" height="5.8" stroke="#fff" stroke-width="1.2" fill="none"/>
<rect x="72.8" y="740" width="1.3" height="15" fill="#fff"/>
<rect x="72" y="743.8" width="3" height="3" fill="#fff"/>
<!-- coc coc -->
<circle cx="117.4" cy="747.5" r="11.5" fill="#8cc84a"/>
<circle cx="117.4" cy="747.5" r="8.5" fill="#a8d870"/>
<circle cx="117.4" cy="747.5" r="6.3" fill="#f4f8e8"/>
<circle cx="117.4" cy="747.5" r="4.2" fill="#7cc040"/>
<circle cx="117.4" cy="747.5" r="2.2" fill="#b8e090"/>
<path d="M121 736 L130 736 L129 748 L122 743 Z" fill="#8cc84a"/>
<path d="M118.5 737.5 L119.5 743 M122 737 L121.5 743.5 M125 739 L122.5 744.5 M127.5 742 L123 745.5" stroke="#e87050" stroke-width="1.6"/>
<path d="M124 737 L128 737" stroke="#f8f0e0" stroke-width="1.2"/>
<rect x="98" y="766" width="39" height="2" fill="#76b9ed"/>
<!-- folder -->
<path d="M156 739 L163 739 L165 741 L178.5 741 L178.5 756 L156 756 Z" fill="#e8c050"/>
<rect x="156" y="743" width="22.5" height="13" fill="#f4d070"/>
<path d="M160 751 L160 748 L174.5 748 L174.5 751 L171 751 L171 756 L163.5 756 L163.5 751 Z" fill="#4a8ac8"/>
<rect x="164.5" y="752" width="6" height="4" fill="#f4d070"/>
<rect x="147" y="766" width="40" height="2" fill="#76b9ed"/>
<!-- edge -->
<circle cx="216" cy="747.5" r="12.2" fill="#1a7ad0"/>
<path d="M205 744 Q208 735.5 217 735.3 Q227 735.5 228.5 745 Q228.5 751 222 751.5 Q216 752 215 747 Q214 742 208 742.5 Q206 743 205 744 Z" fill="#40c070"/>
<path d="M206.5 751 Q207.5 743.5 214 744.5 Q218 746 217.5 751 Q218 756.5 226 755.5 Q221.5 760.5 214 759.5 Q207 758 206.5 751 Z" fill="#1860b0"/>
<ellipse cx="216.5" cy="748" rx="3.2" ry="2.8" fill="#123a70"/>
<!-- zalo -->
<path d="M252 741 Q252 736 258 736 L273 736 Q279 736 279 741 L279 752 Q279 758 273 758 L259 758 L254 761 L255 756 Q252 754 252 750 Z" fill="#fff"/>
<path d="M252 744 Q252 737 258 736 L260 736 Q254 742 255 753 L254 761 L255 756 Q252 754 252 750 Z" fill="#1e70e8"/>
<text x="258" y="749" font-family="Liberation Sans" font-weight="bold" font-size="8" fill="#1e70e8">Zalo</text>
<circle cx="271.7" cy="753.8" r="7.6" fill="#e01c24"/>
<text x="271.7" y="757.6" font-family="Liberation Sans" font-size="10.5" fill="#fff" text-anchor="middle">3</text>
<rect x="245" y="766" width="39" height="2" fill="#76b9ed"/>
<!-- autocad -->
<rect x="301.5" y="736" width="25" height="24" fill="#e8f4f2"/>
<rect x="303" y="737.5" width="22" height="21" fill="#2a9a94"/>
<path d="M304 752 L324 745" stroke="#5ab8b0" stroke-width="3" opacity="0.6"/>
<path d="M306.5 754 L311.5 741 L316 754 M308 750 L314.5 750" stroke="#e8fff8" stroke-width="2" fill="none"/>
<rect x="305" y="755" width="9" height="2" fill="#e8fff8"/>
<path d="M318 749 L323 749 L323 755 L318 755 Z" stroke="#e8fff8" stroke-width="1.1" fill="none"/>
<path d="M322 739 L322 748" stroke="#e8fff8" stroke-width="0.8"/>
<rect x="290" y="766" width="48" height="2" fill="#9fd0f5"/>
<!-- word -->
<rect x="357" y="739" width="17" height="19" fill="#f0f0f0"/>
<path d="M360 742 L372 742 M360 745 L372 745 M360 748 L372 748 M360 751 L372 751 M360 754 L372 754" stroke="#2b579a" stroke-width="1"/>
<path d="M350 740 L364 738 L364 758 L350 756 Z" fill="#2b579a"/>
<text x="351.5" y="752.5" font-family="Liberation Sans" font-weight="bold" font-size="10" fill="#fff">W</text>
<rect x="343" y="766" width="40" height="2" fill="#76b9ed"/>
</svg>
</div>
</body></html>
